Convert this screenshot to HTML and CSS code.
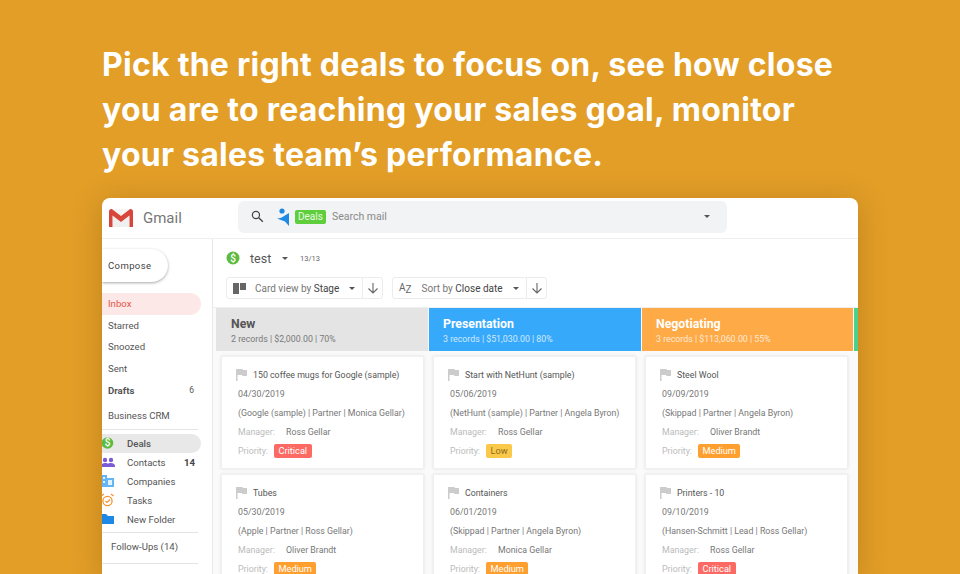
FILE: index.html
```html
<!DOCTYPE html>
<html lang="en">
<head>
    <meta charset="UTF-8">
    <title>Deals pipeline</title>
    <link rel="stylesheet" href="styles.css">
</head>
<body>
    <h1 class="headline">Pick the right deals to focus on, see how close<br>you are to reaching your sales goal, monitor<br>your sales team’s performance.</h1>
    <div class="app">
        <header class="topbar">
            <div class="logo">
                <svg width="26" height="20" viewBox="0 0 26 20"><path d="M4 1h18l-9 7z" fill="#f4f4f4"/><path d="M4.500 19V7l8.500 6.500L21.500 7v12z" fill="#efefef"/><path d="M1 3.500C1 1.500 3 .5 4.500 1.500L13 8l8.500-6.500C23 .5 25 1.500 25 3.500V19h-3.500V7.500L13 14 4.500 7.500V19H1z" fill="#d8453a"/></svg>
                <span class="logo-text">Gmail</span>
            </div>
            <div class="search">
                <svg class="search-icon" width="15" height="15" viewBox="0 0 24 24"><circle cx="9.500" cy="9.500" r="5.700" fill="none" stroke="#444" stroke-width="2"/><path d="M14 14l6.500 6.500" stroke="#444" stroke-width="2.200"/></svg>
                <svg width="14" height="18" viewBox="0 0 14 18"><circle cx="6" cy="3" r="2.600" fill="#1e88e5"/><path d="M13 5v13l-4-4.500L1 10.500c3-.2 5.500-1 7-2.500z" fill="#1e88e5"/></svg>
                <span class="search-tag">Deals</span>
                <span class="search-hint">Search mail</span>
                <span class="caret search-caret"></span>
            </div>
        </header>
        <div class="main">
            <nav class="sidebar">
                <button class="compose">Compose</button>
                <ul class="mail-list">
                    <li class="mail-item active">Inbox</li>
                    <li class="mail-item">Starred</li>
                    <li class="mail-item">Snoozed</li>
                    <li class="mail-item">Sent</li>
                    <li class="mail-item bold">Drafts <span class="count">6</span></li>
                </ul>
                <div class="crm-title">Business CRM</div>
                <ul class="folder-list">
                    <li class="folder current">
                        <svg width="14" height="14" viewBox="0 0 14 14"><circle cx="5.500" cy="7" r="5.800" fill="#5dbb3f"/><text x="5.500" y="10" text-anchor="middle" class="dollar">$</text></svg>
                        Deals
                    </li>
                    <li class="folder">
                        <svg width="14" height="14" viewBox="0 0 14 14"><circle cx="3" cy="5" r="2.200" fill="#7c5cd6"/><circle cx="9" cy="5" r="2.200" fill="#7c5cd6"/><path d="M-1 11c0-2 2-3 4-3s3 .6 3 1c0-.4 1-1 3-1s4 1 4 3v1H-1z" fill="#7c5cd6"/></svg>
                        Contacts <span class="folder-count">14</span>
                    </li>
                    <li class="folder">
                        <svg width="14" height="14" viewBox="0 0 14 14"><path d="M-1 1h6v3h7v9H-1z" fill="#64b5f6"/><path d="M6 6h4v5H6zM1 3h2v2H1zM1 7h2v2H1z" fill="#e3f2fd"/></svg>
                        Companies
                    </li>
                    <li class="folder">
                        <svg width="14" height="14" viewBox="0 0 14 14"><circle cx="5.500" cy="8" r="4.600" fill="none" stroke="#f59331" stroke-width="1.300"/><path d="M3.500 8L5 9.500 8 6.500M-.5 3L2 1M11.500 3L9 1" fill="none" stroke="#f59331" stroke-width="1.200"/></svg>
                        Tasks
                    </li>
                    <li class="folder">
                        <svg width="14" height="14" viewBox="0 0 14 14"><path d="M-1 2h5l2 2h6v8H-1z" fill="#1e88e5"/></svg>
                        New Folder
                    </li>
                </ul>
                <div class="followups">Follow-Ups (14)</div>
            </nav>
            <section class="content">
                <div class="title-row">
                    <svg width="14" height="14" viewBox="0 0 14 14"><circle cx="7" cy="7" r="6.500" fill="#5dbb3f"/><text x="7" y="10.500" text-anchor="middle" class="dollar">$</text></svg>
                    <span class="view-name">test</span>
                    <span class="caret"></span>
                    <span class="view-count">13/13</span>
                </div>
                <div class="tools">
                    <div class="tool card-view">
                        <div class="tool-main">
                            <svg width="13" height="11" viewBox="0 0 13 11"><path d="M0 0h6v11H0zM7 0h6v7H7z" fill="#666"/></svg>
                            <span class="tool-label">Card view by <b>Stage</b></span>
                            <span class="caret"></span>
                        </div>
                        <div class="tool-dir"><svg width="12" height="12" viewBox="0 0 12 12"><path d="M6 1v10M1.500 6.500L6 11l4.500-4.500" fill="none" stroke="#666" stroke-width="1.100"/></svg></div>
                    </div>
                    <div class="tool sort-view">
                        <div class="tool-main">
                            <span class="az">A<i>Z</i></span>
                            <span class="tool-label">Sort by <b>Close date</b></span>
                            <span class="caret"></span>
                        </div>
                        <div class="tool-dir"><svg width="12" height="12" viewBox="0 0 12 12"><path d="M6 1v10M1.500 6.500L6 11l4.500-4.500" fill="none" stroke="#666" stroke-width="1.100"/></svg></div>
                    </div>
                </div>
                <div class="board">
                    <div class="column">
                        <div class="stage stage-new">
                            <div class="stage-name">New</div>
                            <div class="stage-info">2 records | $2,000.00 | 70%</div>
                        </div>
                        <div class="deal">
                            <div class="deal-title"><svg class="flag" viewBox="0 0 11 12"><path d="M0 0h6.500l.5 1H11v6H6.500L6 6H1.500v6H0z"/></svg>150 coffee mugs for Google (sample)</div>
                            <div class="deal-line">04/30/2019</div>
                            <div class="deal-line">(Google (sample) | Partner | Monica Gellar)</div>
                            <div class="deal-line"><span class="key">Manager:</span>Ross Gellar</div>
                            <div class="deal-line"><span class="key key-short">Priority:</span><span class="tag critical">Critical</span></div>
                        </div>
                        <div class="deal">
                            <div class="deal-title"><svg class="flag" viewBox="0 0 11 12"><path d="M0 0h6.500l.5 1H11v6H6.500L6 6H1.500v6H0z"/></svg>Tubes</div>
                            <div class="deal-line">05/30/2019</div>
                            <div class="deal-line">(Apple | Partner | Ross Gellar)</div>
                            <div class="deal-line"><span class="key">Manager:</span>Oliver Brandt</div>
                            <div class="deal-line"><span class="key key-short">Priority:</span><span class="tag medium">Medium</span></div>
                        </div>
                    </div>
                    <div class="column">
                        <div class="stage stage-presentation">
                            <div class="stage-name">Presentation</div>
                            <div class="stage-info">3 records | $51,030.00 | 80%</div>
                        </div>
                        <div class="deal">
                            <div class="deal-title"><svg class="flag" viewBox="0 0 11 12"><path d="M0 0h6.500l.5 1H11v6H6.500L6 6H1.500v6H0z"/></svg>Start with NetHunt (sample)</div>
                            <div class="deal-line">05/06/2019</div>
                            <div class="deal-line">(NetHunt (sample) | Partner | Angela Byron)</div>
                            <div class="deal-line"><span class="key">Manager:</span>Ross Gellar</div>
                            <div class="deal-line"><span class="key key-short">Priority:</span><span class="tag low">Low</span></div>
                        </div>
                        <div class="deal">
                            <div class="deal-title"><svg class="flag" viewBox="0 0 11 12"><path d="M0 0h6.500l.5 1H11v6H6.500L6 6H1.500v6H0z"/></svg>Containers</div>
                            <div class="deal-line">06/01/2019</div>
                            <div class="deal-line">(Skippad | Partner | Angela Byron)</div>
                            <div class="deal-line"><span class="key">Manager:</span>Monica Gellar</div>
                            <div class="deal-line"><span class="key key-short">Priority:</span><span class="tag medium">Medium</span></div>
                        </div>
                    </div>
                    <div class="column">
                        <div class="stage stage-negotiating">
                            <div class="stage-name">Negotiating</div>
                            <div class="stage-info">3 records | $113,060.00 | 55%</div>
                        </div>
                        <div class="deal">
                            <div class="deal-title"><svg class="flag" viewBox="0 0 11 12"><path d="M0 0h6.500l.5 1H11v6H6.500L6 6H1.500v6H0z"/></svg>Steel Wool</div>
                            <div class="deal-line">09/09/2019</div>
                            <div class="deal-line">(Skippad | Partner | Angela Byron)</div>
                            <div class="deal-line"><span class="key">Manager:</span>Oliver Brandt</div>
                            <div class="deal-line"><span class="key key-short">Priority:</span><span class="tag medium">Medium</span></div>
                        </div>
                        <div class="deal">
                            <div class="deal-title"><svg class="flag" viewBox="0 0 11 12"><path d="M0 0h6.500l.5 1H11v6H6.500L6 6H1.500v6H0z"/></svg>Printers - 10</div>
                            <div class="deal-line">09/10/2019</div>
                            <div class="deal-line">(Hansen-Schmitt | Lead | Ross Gellar)</div>
                            <div class="deal-line"><span class="key">Manager:</span>Ross Gellar</div>
                            <div class="deal-line"><span class="key key-short">Priority:</span><span class="tag critical">Critical</span></div>
                        </div>
                    </div>
                    <div class="next-stage"></div>
                </div>
            </section>
        </div>
    </div>
</body>
</html>
```

FILE: styles.css
```css
* {
    margin: 0;
    padding: 0;
    box-sizing: border-box;
}
html, body {
    height: 574px;
    overflow: hidden;
}
body {
    background: #e29e27;
    padding: 42px 102px 0;
    font-family: Roboto, sans-serif;
    color: #555;
}
.headline {
    font-family: Inter, sans-serif;
    font-weight: 700;
    font-size: 32px;
    letter-spacing: 0.25px;
    line-height: 45px;
    color: #fff;
    height: 156px;
    white-space: nowrap;
}
.app {
    width: 756px;
    height: 380px;
    background: #fff;
    border-radius: 8px 8px 0 0;
    box-shadow: 0 4px 30px rgba(90, 50, 0, 0.25);
    overflow: hidden;
}
.topbar {
    display: flex;
    align-items: center;
    height: 41px;
    border-bottom: 1px solid #efefef;
}
.logo {
    display: flex;
    align-items: center;
    width: 136px;
    padding-left: 6px;
    gap: 9px;
}
.logo-text {
    font-size: 15px;
    color: #777;
}
.search {
    display: flex;
    align-items: center;
    width: 489px;
    height: 32px;
    background: #f1f3f4;
    border-radius: 6px;
    padding-left: 12px;
    margin-top: -3px;
}
.search-icon {
    margin-right: 11px;
}
.search-tag {
    background: #5fce3c;
    color: #e8f8e0;
    font-size: 10px;
    padding: 1px 3px;
    border-radius: 2px;
    margin-left: 5px;
    line-height: 12px;
}
.search-hint {
    font-size: 10.500px;
    color: #8a8a8a;
    margin-left: 6px;
}
.caret {
    width: 0;
    height: 0;
    border-left: 3.500px solid transparent;
    border-right: 3.500px solid transparent;
    border-top: 3.500px solid #555;
}
.search-caret {
    margin-left: auto;
    margin-right: 17px;
}
.main {
    display: flex;
    height: 339px;
}
.sidebar {
    width: 111px;
    flex-shrink: 0;
    border-right: 1px solid #e8e8e8;
    font-size: 9.600px;
}
.compose {
    display: block;
    width: 66px;
    height: 33px;
    margin-top: 10px;
    border: none;
    border-radius: 0 17px 17px 0;
    background: #fff;
    box-shadow: 0 1px 3px rgba(0, 0, 0, 0.35);
    font: 400 9.500px Roboto, sans-serif;
    letter-spacing: 0.4px;
    color: #444;
    text-align: left;
    padding-left: 6px;
}
.mail-list {
    list-style: none;
    margin-top: 11px;
}
.mail-item {
    display: flex;
    justify-content: space-between;
    align-items: center;
    width: 99px;
    height: 21.600px;
    padding: 0 6px;
    color: #555;
}
.mail-item.active {
    background: #fce8e6;
    color: #e5554b;
    border-radius: 0 11px 11px 0;
}
.mail-item.bold {
    font-weight: 700;
}
.count {
    font-weight: 400;
    font-size: 8.500px;
    margin-right: 1px;
}
.crm-title {
    margin-top: 7px;
    padding: 0 6px 6px;
    line-height: 15px;
    width: 96px;
    border-bottom: 1px solid #e4e4e4;
}
.folder-list {
    list-style: none;
    margin-top: 4px;
    width: 96px;
    padding-bottom: 3px;
    border-bottom: 1px solid #e4e4e4;
}
.folder {
    display: flex;
    align-items: center;
    gap: 11px;
    height: 19px;
    width: 99px;
}
.folder.current {
    background: #e8e8e8;
    border-radius: 0 10px 10px 0;
    font-weight: 500;
}
.folder-count {
    margin-left: auto;
    margin-right: 6px;
    font-weight: 700;
    color: #444;
}
.dollar {
    font: 500 10px Roboto, sans-serif;
    fill: #fff;
}
.followups {
    padding: 6px 9px 9px;
    width: 96px;
    line-height: 15px;
    border-bottom: 1px solid #e4e4e4;
}
.content {
    flex: 1;
    min-width: 0;
}
.title-row {
    display: flex;
    align-items: center;
    height: 38px;
    padding-left: 13px;
}
.view-name {
    font-size: 12.500px;
    margin-left: 10px;
    color: #555;
    width: 32px;
}
.view-count {
    font-size: 7.500px;
    margin-left: 12px;
    color: #666;
}
.tools {
    display: flex;
    gap: 9px;
    padding-left: 13px;
    height: 30px;
}
.tool {
    display: flex;
    height: 22px;
    border: 1px solid #ececec;
    border-radius: 3px;
    font-size: 10px;
}
.tool b {
    font-weight: 400;
    color: #444;
}
.tool-main {
    display: flex;
    align-items: center;
    padding-left: 6px;
}
.card-view .tool-main {
    width: 135px;
}
.sort-view .tool-main {
    width: 133px;
}
.tool-label {
    margin-left: 10px;
    color: #777;
    flex: 1;
    white-space: nowrap;
}
.card-view .tool-label {
    margin-left: 9px;
}
.tool-main .caret {
    margin-right: 7px;
}
.tool-dir {
    display: flex;
    align-items: center;
    justify-content: center;
    width: 20px;
    border-left: 1px solid #ececec;
}
.az {
    font-size: 10px;
    color: #666;
    display: flex;
}
.az i {
    font-style: normal;
    margin-top: 2px;
}
.board {
    display: flex;
    gap: 1px;
    padding-left: 3px;
    background: #fafafa;
    height: 270px;
    border-top: 1px solid #eef0f2;
}
.column {
    width: 212px;
    flex-shrink: 0;
}
.column:nth-child(3) {
    width: 211px;
}
.next-stage {
    flex: 1;
    height: 43px;
    background: #4bd08f;
}
.stage {
    height: 43px;
    padding: 9px 14px 0;
    color: #fff;
}
.stage-new {
    background: #e4e4e4;
    color: #555;
    padding-left: 15px;
}
.stage-presentation {
    background: #36a9fb;
}
.stage-negotiating {
    background: #feaa47;
}
.stage-name {
    font-size: 12.300px;
    font-weight: 700;
    line-height: 15px;
}
.stage-info {
    font-size: 8.800px;
    line-height: 12px;
    margin-top: 1px;
    opacity: 0.75;
}
.deal {
    width: 203px;
    height: 113px;
    margin: 5px 0 5px 5px;
    background: #fff;
    border: 1px solid #f0f0f0;
    box-shadow: 0 0 3px rgba(0, 0, 0, 0.1);
    padding: 8px 16px;
    font-size: 8.800px;
    color: #777;
}
.column:nth-child(2) .deal {
    margin-left: 4px;
}
.column:nth-child(3) .deal {
    margin-left: 3px;
}
.deal-title {
    display: flex;
    align-items: center;
    height: 19px;
    color: #555;
    margin-left: -2px;
}
.flag {
    width: 11px;
    height: 12px;
    fill: #ccc;
    margin-right: 6px;
}
.deal-line {
    display: flex;
    align-items: center;
    height: 19px;
    white-space: nowrap;
}
.key {
    width: 48px;
    color: #bbb;
}
.key-short {
    width: 36px;
}
.tag {
    display: inline-block;
    color: #fff;
    font-size: 9.200px;
    border-radius: 2px;
    padding: 0 4.500px;
    line-height: 14px;
}
.critical {
    background: #fd6a63;
}
.medium {
    background: #fe9f2f;
}
.low {
    background: #fbc94a;
    color: #8c6d1f;
}
```
